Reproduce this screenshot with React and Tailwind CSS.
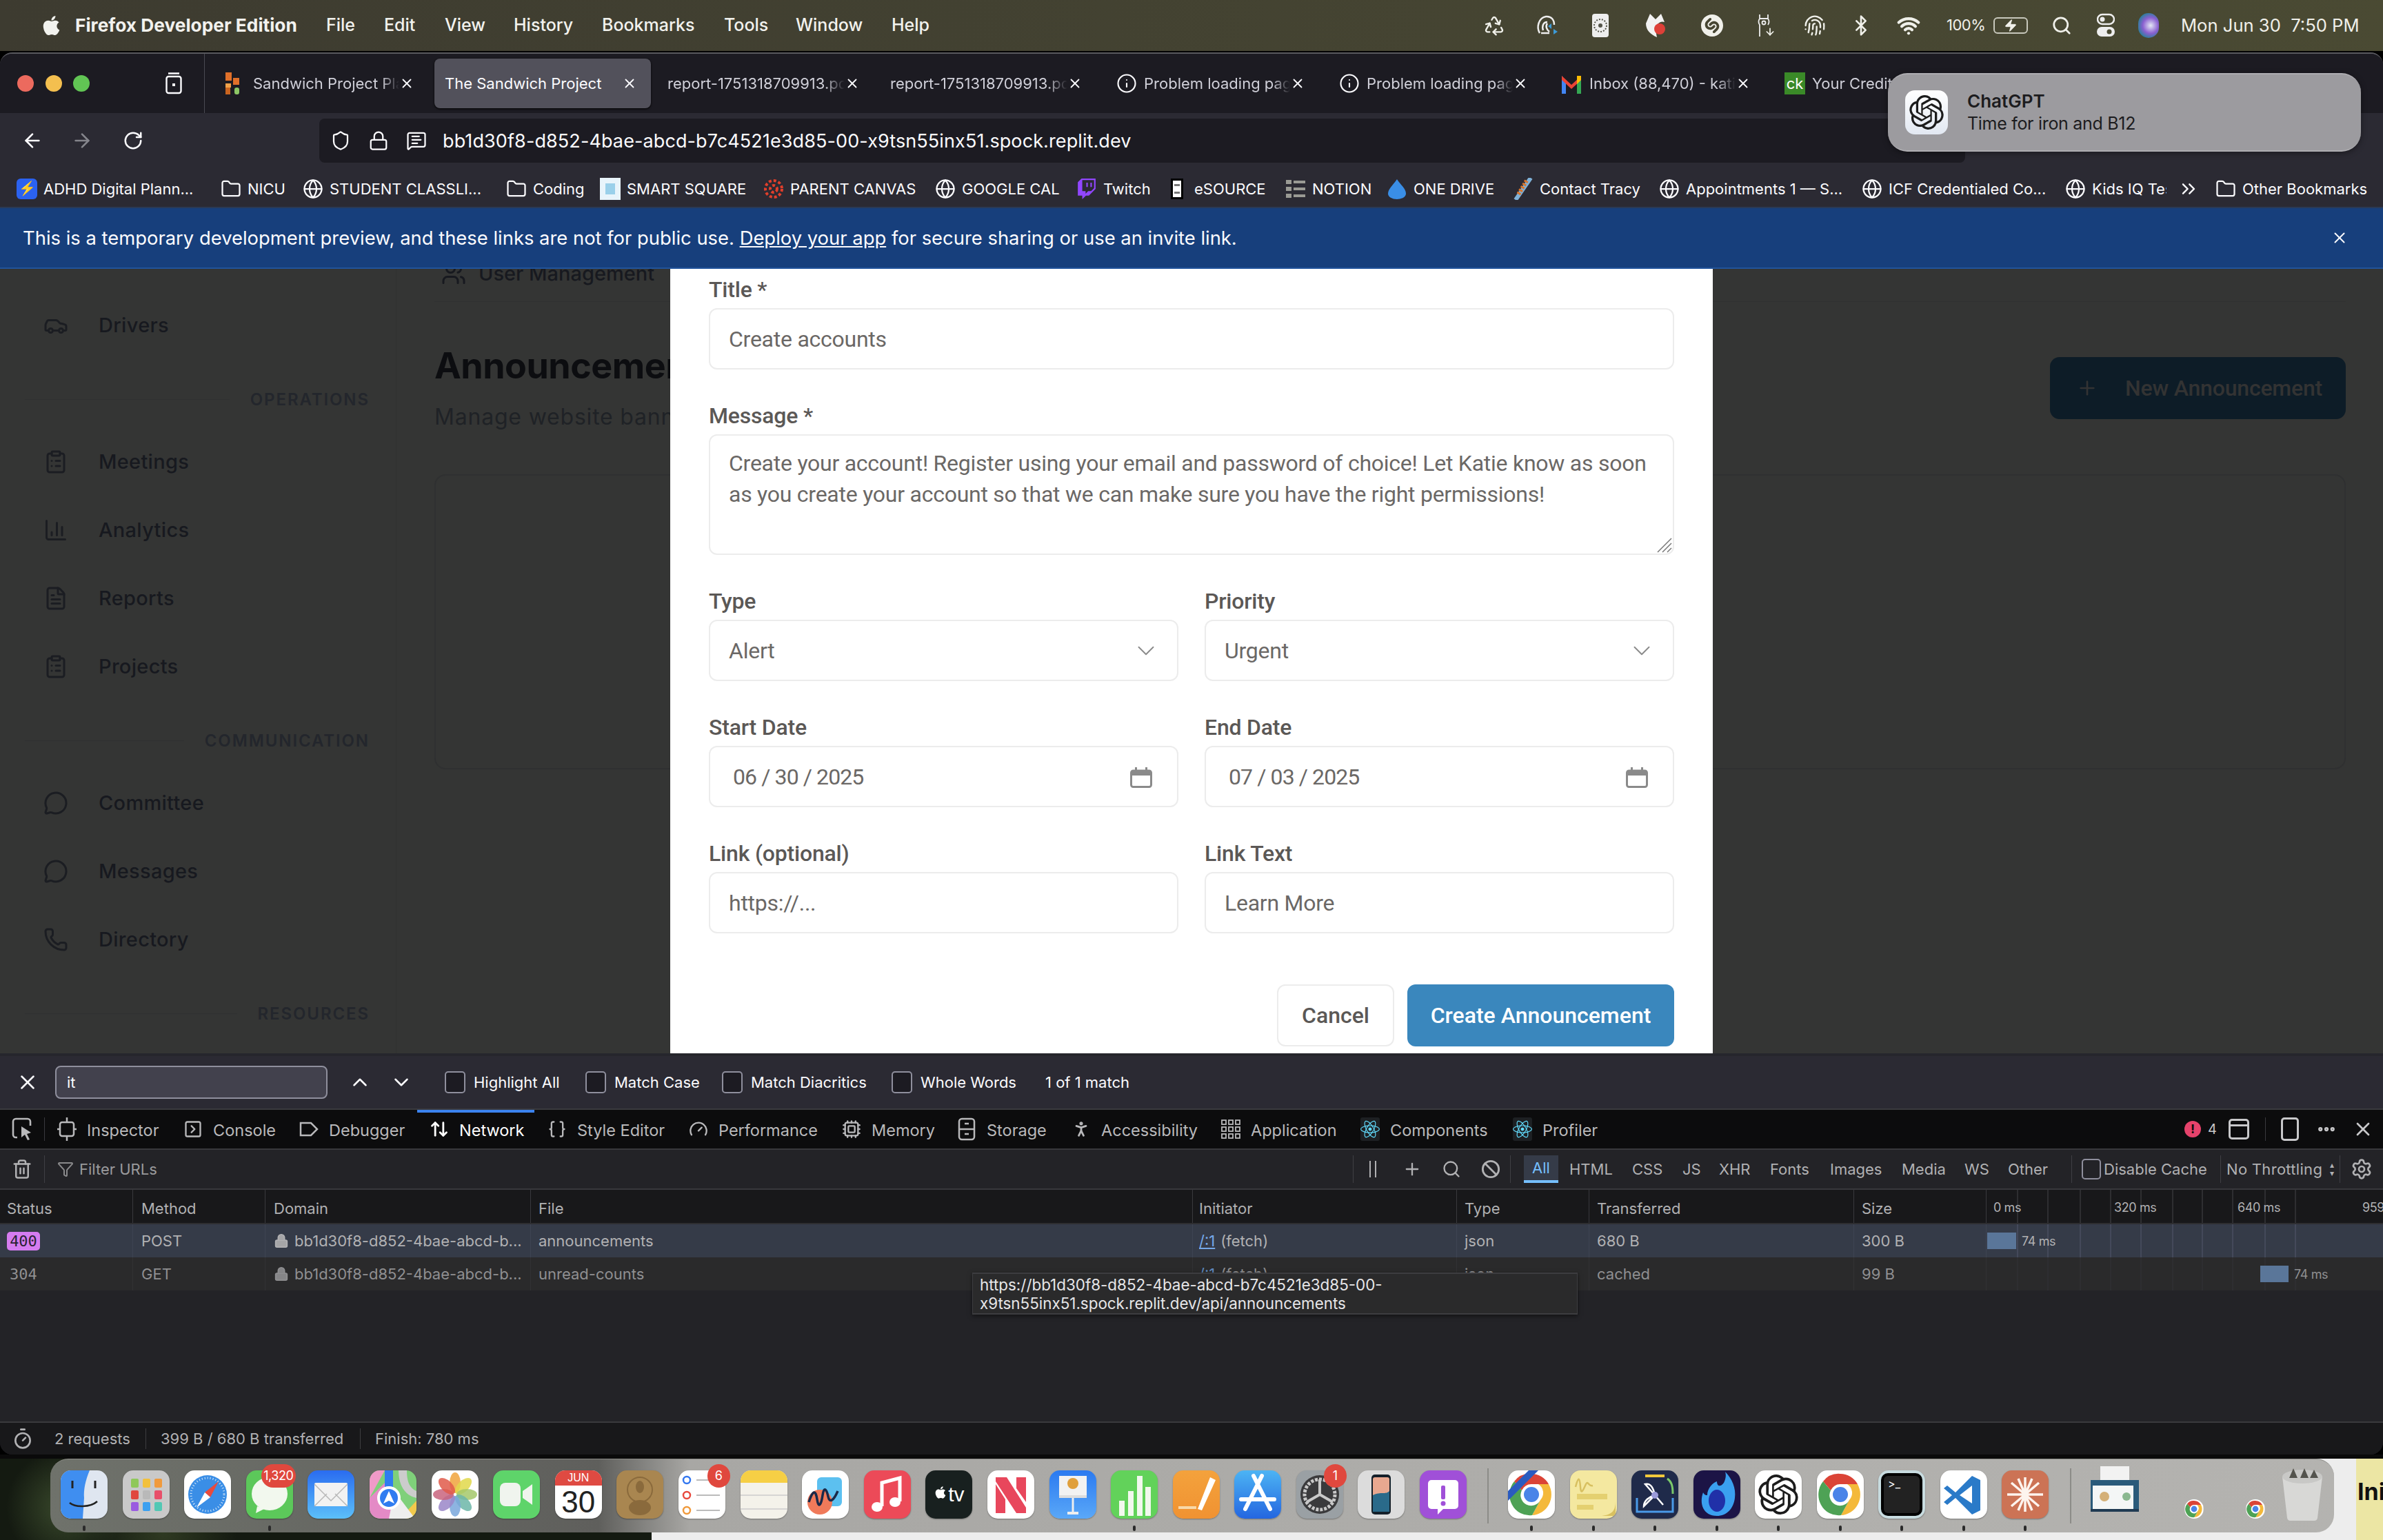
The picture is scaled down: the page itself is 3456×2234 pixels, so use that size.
import React from "react";
import clsx from "clsx";
import {
  ArrowDown, ArrowLeft, ArrowRight, ArrowUpDown, Ban, Bluetooth, Braces, Car, ChartColumn, ChevronDown, ChevronUp,
  ChevronsRight, ClipboardList, Cpu, Ellipsis, FileText, Filter, Fingerprint, Folder, Gauge, Globe, Info, Lock,
  MessageCircle, MessageSquareText, PersonStanding, Phone, Plus, Recycle, RotateCw, Search, Settings,
  Shield, SquareChevronRight, Timer, Trash2, Users, Wifi, X, Zap,
} from "lucide-react";
import { FaApple, FaReact } from "react-icons/fa";
import { SiOpenai, SiShazam, SiTwitch } from "react-icons/si";

const leftMenus = [
  ["File", "w-[84px]"], ["Edit", "w-[88px]"], ["View", "w-[100px]"], ["History", "w-[128px]"],
  ["Bookmarks", "w-[177px]"], ["Tools", "w-[104px]"], ["Window", "w-[139px]"], ["Help", "w-[836px]"],
];

function TrayFan() {
  return (
    <svg width="24" height="34" viewBox="0 0 24 34">
      <rect width="24" height="34" rx="4" fill="#eee" />
      <circle cx="12" cy="17" r="9" fill="none" stroke="#55554a" strokeWidth="2" strokeDasharray="2 2" />
      <circle cx="12" cy="17" r="3" fill="#55554a" />
    </svg>
  );
}

function TrayCloud() {
  return (
    <svg width="34" height="34" viewBox="0 0 34 34" fill="none">
      <path d="M6 28C1 20 4 6 15 4c8-1 12 5 12 12M8 28h12M11 24c-2-6 0-12 6-12M20 26c-4-3-6-8-3-12" stroke="#eee" strokeWidth="2.5" />
      <path d="M23 14l-5 4 5 4zM26 22l6 4-6 4z" fill="#3d9ad6" />
    </svg>
  );
}

function TrayM() {
  return (
    <svg width="28" height="34" viewBox="0 0 28 34">
      <path d="M0 14L6 0l8 8 8-8 5 12c-6-2-11 2-12 8-1 5 0 9 1 14C7 30 0 24 0 14z" fill="#f2f2f2" />
      <circle cx="20" cy="22" r="8" fill="#dd4038" />
    </svg>
  );
}

function TrayLlama() {
  return (
    <div className="relative w-[26px] h-[34px]">
      <svg width="18" height="34" viewBox="0 0 18 34" fill="none" stroke="#eee" strokeWidth="1.8">
        <path d="M3 1v6M15 1v6M3 7c-2 3-2 6 0 9v17M15 7c2 3 2 6 0 9M3 7h12" />
        <circle cx="9" cy="13" r="2.5" />
      </svg>
      <ArrowDown size={16} strokeWidth={2.6} className="absolute right-0 bottom-0" />
    </div>
  );
}

function MenuBar() {
  return (
    <div className="h-[74px] shrink-0 flex items-center pl-[40px] text-[25px] text-[#f2f2ee] bg-[linear-gradient(to_right,#3d3b30,#4a4a33)]">
      <FaApple className="w-[69px] text-[32px] pr-[39px] box-content -mr-[39px] shrink-0" />
      <span className="w-[364px] font-bold text-[26.3px] whitespace-nowrap">Firefox Developer Edition</span>
      {leftMenus.map(([label, w]) => (
        <span key={label} className={clsx("font-medium shrink-0", w)}>{label}</span>
      ))}
      <div className="flex items-center text-[#f0f0ea]">
        <div className="w-[76px] flex justify-center"><Recycle size={32} strokeWidth={1.8} /></div>
        <div className="w-[77px] flex justify-center"><TrayCloud /></div>
        <div className="w-[78px] flex justify-center"><TrayFan /></div>
        <div className="w-[81px] flex justify-center"><TrayM /></div>
        <div className="w-[84px] flex justify-center"><SiShazam size={32} /></div>
        <div className="w-[74px] flex justify-center"><TrayLlama /></div>
        <div className="w-[66px] flex justify-center"><Fingerprint size={32} strokeWidth={1.8} /></div>
        <div className="w-[68px] flex justify-center"><Bluetooth size={32} strokeWidth={2} /></div>
        <div className="w-[70px] flex justify-center"><Wifi size={34} strokeWidth={3} /></div>
        <span className="ml-[20px] w-[68px] text-[22px] tracking-[-0.5px]">100%</span>
        <div className="w-[50px] h-[24px] border-2 border-[#c8c8bc] rounded-[6px] flex items-center justify-center">
          <Zap size={20} fill="#f0f0ea" strokeWidth={1} />
        </div>
        <Search size={30} strokeWidth={2.2} className="ml-[34px]" />
        <svg width="26" height="36" viewBox="0 0 26 36" className="ml-[36px]">
          <rect x="1" y="2" width="24" height="14" rx="7" fill="none" stroke="#eee" strokeWidth="2.5" />
          <circle cx="8" cy="9" r="3.5" fill="#eee" />
          <rect y="20" width="26" height="14" rx="7" fill="#eee" />
          <circle cx="18" cy="27" r="3.5" fill="#4a4a33" />
        </svg>
        <span className="ml-[34px] w-[30px] h-[36px] rounded-full bg-[radial-gradient(circle_at_60%_50%,#e4e8f5,#8a5fd0_45%,#2c7f9c_75%,#3c3c40)]" />
        <span className="ml-[32px] text-[25.6px] whitespace-nowrap">Mon Jun 30&nbsp;&nbsp;7:50 PM</span>
      </div>
    </div>
  );
}

function FirefoxView() {
  return (
    <svg width="24" height="32" viewBox="0 0 24 32" fill="none" stroke="#fbfbfe" strokeWidth="2.4">
      <rect x="1.5" y="6" width="21" height="24" rx="3" />
      <path d="M4 1.5h16" />
      <rect x="10" y="16" width="4" height="4" fill="#fbfbfe" stroke="none" />
    </svg>
  );
}

function SandwichIcon() {
  return (
    <svg width="22" height="32" viewBox="0 0 22 32">
      <rect y="0" width="9" height="12" fill="#e0702a" />
      <rect x="11" y="8" width="9" height="10" fill="#e0702a" />
      <rect y="16" width="8" height="6" fill="#f0a24a" />
      <rect y="22" width="7" height="10" fill="#c9641f" />
      <rect x="13" y="22" width="7" height="10" rx="3" fill="#8cc665" />
    </svg>
  );
}

function GmailIcon() {
  return (
    <svg width="28" height="30" viewBox="0 0 28 30">
      <path d="M0 4v26h6V12z" fill="#4285f4" />
      <path d="M22 12v18h6V4z" fill="#34a853" />
      <path d="M0 4l14 13L28 4v6L14 23 0 10z" fill="#ea4335" />
      <path d="M22 4h6v6l-6 6z" fill="#fbbc04" />
    </svg>
  );
}

function Tab({ label, icon, active }) {
  return (
    <div className={clsx("w-[314px] h-[72px] mr-[9px] shrink-0 flex items-center rounded-[8px] pr-[20px]", icon ? "pl-[20px]" : "pl-[15px]", active && "bg-[#52515b] shadow-[0_1px_3px_#000]")}>
      {icon && <div className="w-[40px] shrink-0">{icon}</div>}
      <div className={clsx("flex-1 overflow-hidden whitespace-nowrap text-[22px]", active ? "text-[#fbfbfe]" : "text-[#cfcfd8] [mask-image:linear-gradient(to_right,black_88%,transparent)]")}>{label}</div>
      <X size={22} strokeWidth={2} className="text-[#fbfbfe] shrink-0" />
    </div>
  );
}

function TabStrip() {
  return (
    <div className="h-[86px] flex items-center bg-[#1c1b22] overflow-hidden">
      <div className="w-[297px] h-full shrink-0 border-r border-[#4a4a52] flex items-center pl-[25px]">
        <span className="w-[24px] h-[24px] rounded-full bg-[#ec6a5e]" />
        <span className="w-[24px] h-[24px] rounded-full bg-[#f4bf4f] ml-[17px]" />
        <span className="w-[24px] h-[24px] rounded-full bg-[#61c554] ml-[16px]" />
        <div className="ml-[110px]"><FirefoxView /></div>
      </div>
      <div className="flex pl-[10px]">
        <Tab label="Sandwich Project Plan" icon={<SandwichIcon />} />
        <Tab label="The Sandwich Project" active />
        <Tab label="report-1751318709913.pdf" />
        <Tab label="report-1751318709913.pdf" />
        <Tab label="Problem loading page" icon={<Info size={30} strokeWidth={1.7} className="text-[#fbfbfe]" />} />
        <Tab label="Problem loading page" icon={<Info size={30} strokeWidth={1.7} className="text-[#fbfbfe]" />} />
        <Tab label="Inbox (88,470) - katie@" icon={<GmailIcon />} />
        <Tab label="Your Credit Karma" icon={<span className="block w-[30px] h-[32px] bg-[#3a8a28] text-white text-[22px] leading-[32px] text-center">ck</span>} />
      </div>
    </div>
  );
}

function UrlBar() {
  return (
    <div className="h-[84px] flex items-start pt-[8px] bg-[#2b2a33] text-[#fbfbfe]">
      <div className="w-[463px] shrink-0 h-[64px] flex items-center text-[#fbfbfe]">
        <ArrowLeft size={32} strokeWidth={2} className="ml-[31px]" />
        <ArrowRight size={32} strokeWidth={2} className="ml-[40px] text-[#85858c]" />
        <RotateCw size={30} strokeWidth={2} className="ml-[43px]" />
      </div>
      <div className="w-[2387px] h-[64px] rounded-[8px] bg-[#1c1b22] flex items-center">
        <Shield size={30} strokeWidth={1.8} className="ml-[16px]" />
        <Lock size={30} strokeWidth={1.8} className="ml-[25px]" />
        <MessageSquareText size={30} strokeWidth={1.8} className="ml-[25px]" />
        <span className="ml-[23px] pt-[3px] text-[27px] font-normal tracking-[0.1px]">bb1d30f8-d852-4bae-abcd-b7c4521e3d85-00-x9tsn55inx51.spock.replit.dev</span>
      </div>
    </div>
  );
}

const FolderIcon = <Folder size={30} strokeWidth={1.8} />;
const GlobeIcon = <Globe size={30} strokeWidth={1.8} />;

const bookmarks = [
  { label: "ADHD Digital Plann...", w: "w-[296px]", icon: <span className="block w-[30px] h-[30px] rounded-[6px] bg-[#2b62f0] text-center text-[20px] leading-[28px]">⚡</span> },
  { label: "NICU", w: "w-[119px]", icon: FolderIcon },
  { label: "STUDENT CLASSLI...", w: "w-[295px]", icon: GlobeIcon },
  { label: "Coding", w: "w-[136px]", icon: FolderIcon },
  { label: "SMART SQUARE", w: "w-[237px]", icon: <span className="block w-[32px] h-[32px] bg-[#e8f4fb] p-[8px]"><span className="block w-full h-full bg-[#9ad0ea]" /></span> },
  { label: "PARENT CANVAS", w: "w-[249px]", icon: <svg width="30" height="30" viewBox="0 0 30 30" fill="none" stroke="#e13f2b" strokeWidth="4" strokeDasharray="4 3"><circle cx="15" cy="15" r="12" /><circle cx="15" cy="15" r="5" /></svg> },
  { label: "GOOGLE CAL", w: "w-[205px]", icon: GlobeIcon },
  { label: "Twitch", w: "w-[137px]", icon: <SiTwitch size={30} className="text-[#9146ff]" /> },
  { label: "eSOURCE", w: "w-[166px]", icon: <span className="block w-[18px] h-[30px] bg-white border-[3px] border-black pt-[5px] px-[2px]"><span className="block h-[14px] border-y-[3px] border-[#777]" /></span> },
  { label: "NOTION", w: "w-[147px]", icon: <svg width="28" height="30" viewBox="0 0 28 30" fill="#9a9a94"><rect y="2" width="8" height="6" /><rect x="11" y="3" width="17" height="4" /><rect y="12" width="8" height="6" /><rect x="11" y="13" width="17" height="4" /><rect y="22" width="8" height="6" /><rect x="11" y="23" width="17" height="4" /></svg> },
  { label: "ONE DRIVE", w: "w-[183px]", icon: <svg width="30" height="30" viewBox="0 0 30 30"><path d="M15 1c6 9 13 14 13 21a13 8 0 0 1-26 0C2 15 9 10 15 1z" fill="#3a8ee6" /></svg> },
  { label: "Contact Tracy", w: "w-[212px]", icon: <svg width="30" height="32" viewBox="0 0 30 32"><path d="M26 0L4 32" stroke="#7fb1d8" strokeWidth="6" /><path d="M20 4L8 24" stroke="#d9762d" strokeWidth="6" strokeDasharray="3 2" /></svg> },
  { label: "Appointments 1 — S...", w: "w-[294px]", icon: GlobeIcon },
  { label: "ICF Credentialed Co...", w: "w-[295px]", icon: GlobeIcon },
  { label: "Kids IQ Test", w: "w-[147px] mr-[16px]", icon: GlobeIcon },
];

function BookmarkBar() {
  return (
    <div className="h-[52px] flex items-center pl-[24px] bg-[#2b2a33] text-[#fbfbfe] text-[22px]">
      {bookmarks.map((b) => (
        <div key={b.label} className={clsx("flex items-center shrink-0 overflow-hidden whitespace-nowrap", b.w)}>
          <span className={clsx("shrink-0 flex justify-center", b.label === "eSOURCE" ? "w-[18px] mr-[16px]" : "w-[30px] mr-[9px]")}>{b.icon}</span>
          <span>{b.label}</span>
        </div>
      ))}
      <div className="w-[55px] shrink-0"><ChevronsRight size={32} strokeWidth={1.8} /></div>
      <span className="w-[30px] mr-[9px] shrink-0">{FolderIcon}</span>
      <span className="whitespace-nowrap">Other Bookmarks</span>
    </div>
  );
}

function Banner() {
  return (
    <div className="h-[90px] flex items-center pl-[33px] pr-[50px] bg-[#173f7c] border-t-2 border-[#2a3a55] border-b-2 border-b-[#22549c] text-[#fbfbfe] text-[27.4px]">
      <p className="pt-[2px]">
        This is a temporary development preview, and these links are not for public use. <span className="underline">Deploy your app</span> for secure sharing or use an invite link.
      </p>
      <X size={26} strokeWidth={1.8} className="ml-auto" />
    </div>
  );
}

function NavRow({ icon: Icon, label }) {
  return (
    <div className="h-[99px] pl-[63px] flex items-center text-[29px] tracking-[0.3px] font-medium text-[#17191f]">
      <Icon size={36} strokeWidth={2} className="mr-[44px] text-[#1b1d22]" />
      {label}
    </div>
  );
}

function NavSection({ label }) {
  return (
    <div className="h-[99px] pt-[18px] pl-[36px] pr-[38px] flex items-center">
      <div className="flex-1 border-t border-[#2f3031]" />
      <span className="ml-[30px] text-[24px] font-semibold tracking-[1.9px] text-[#23262c]">{label}</span>
    </div>
  );
}

function Sidebar() {
  return (
    <div className="w-[575px] shrink-0 h-full pt-[32px] border-r border-[#303131]">
      <NavRow icon={Car} label="Drivers" />
      <NavSection label="OPERATIONS" />
      <NavRow icon={ClipboardList} label="Meetings" />
      <NavRow icon={ChartColumn} label="Analytics" />
      <NavRow icon={FileText} label="Reports" />
      <NavRow icon={ClipboardList} label="Projects" />
      <NavSection label="COMMUNICATION" />
      <NavRow icon={MessageCircle} label="Committee" />
      <NavRow icon={MessageCircle} label="Messages" />
      <NavRow icon={Phone} label="Directory" />
      <NavSection label="RESOURCES" />
    </div>
  );
}

function Behind() {
  return (
    <div className="flex-1 h-full pl-[55px] pr-[54px] min-w-0">
      <div className="h-[48px] pb-[34px] flex items-center border-b border-[#2f3031] text-[29px] font-medium text-[#17191f]">
        <Users size={36} strokeWidth={2} className="ml-[10px] mr-[18px]" />
        User Management
      </div>
      <div className="mt-[62px] h-[130px] flex justify-between items-start">
        <div>
          <h1 className="text-[52px] leading-[62px] font-bold text-[#0c0d10] tracking-[-0.5px]">Announcements</h1>
          <p className="mt-[21px] text-[32px] leading-[44px] tracking-[0.8px] text-[#1f2226]">Manage website banners</p>
        </div>
        <div className="mt-[18px] w-[429px] h-[90px] rounded-[14px] bg-[#0d1c27] flex items-center pl-[38px] font-['Roboto',sans-serif] font-medium text-[32px] tracking-[-0.2px] text-[#333]">
          <Plus size={32} strokeWidth={2} className="mr-[39px]" />
          New Announcement
        </div>
      </div>
      <div className="mt-[58px] h-[428px] rounded-[16px] border-2 border-[#2f3031] bg-[#343534]" />
    </div>
  );
}

function Field({ label, children }) {
  return (
    <div>
      <div className="h-[40px] leading-[40px] mb-[7px] font-medium text-[#5b5856] text-[32px] tracking-[-0.2px]">{label}</div>
      {children}
    </div>
  );
}

const box = "h-[89px] border-2 border-[#ececec] rounded-[12px] flex items-center pl-[27px] text-[#6b6866] tracking-[-0.25px]";

function CalendarIcon() {
  return (
    <svg width="32" height="30" viewBox="0 0 32 30" className="absolute right-[36px] top-[29px]">
      <rect x="1.5" y="5" width="29" height="23.5" rx="3" fill="none" stroke="#8a8a8a" strokeWidth="3" />
      <rect x="1.5" y="5" width="29" height="7" fill="#8a8a8a" />
      <rect x="7" y="0" width="3" height="6" fill="#8a8a8a" />
      <rect x="22" y="0" width="3" height="6" fill="#8a8a8a" />
    </svg>
  );
}

function Modal() {
  return (
    <div className="absolute left-[972px] top-0 bottom-0 w-[1512px] bg-white px-[56px] pt-[10px] font-['Roboto',sans-serif] text-[32px] flex flex-col gap-[47px]">
      <Field label="Title *">
        <div className={box}>Create accounts</div>
      </Field>
      <Field label="Message *">
        <div className="relative h-[175px] border-2 border-[#ececec] rounded-[12px] pl-[27px] pr-[16px] pt-[18px] text-[#6b6866] leading-[45px] tracking-[-0.25px]">
          Create your account! Register using your email and password of choice! Let Katie know as soon as you create your account so that we can make sure you have the right permissions!
          <svg width="22" height="22" viewBox="0 0 22 22" className="absolute right-[1px] bottom-[1px]" stroke="#777" strokeWidth="1.5">
            <path d="M1 21L21 1M8 21L21 8M15 21l6-6" />
          </svg>
        </div>
      </Field>
      <div className="grid grid-cols-2 gap-x-[38px] gap-y-[47px]">
        <Field label="Type">
          <div className={clsx(box, "justify-between pr-[24px]")}>
            Alert
            <ChevronDown size={42} strokeWidth={1.1} className="text-[#8a8a8a]" />
          </div>
        </Field>
        <Field label="Priority">
          <div className={clsx(box, "justify-between pr-[24px]")}>
            Urgent
            <ChevronDown size={42} strokeWidth={1.1} className="text-[#8a8a8a]" />
          </div>
        </Field>
        <Field label="Start Date">
          <div className={clsx(box, "relative pl-[33px] !tracking-[-0.9px]")}>
            06 / 30 / 2025
            <CalendarIcon />
          </div>
        </Field>
        <Field label="End Date">
          <div className={clsx(box, "relative pl-[33px] !tracking-[-0.9px]")}>
            07 / 03 / 2025
            <CalendarIcon />
          </div>
        </Field>
        <Field label="Link (optional)">
          <div className={box}>https://...</div>
        </Field>
        <Field label="Link Text">
          <div className={box}>Learn More</div>
        </Field>
      </div>
      <div className="mt-[27px] flex justify-end gap-[19px] font-medium">
        <div className="w-[170px] h-[90px] border-2 border-[#ececec] rounded-[12px] flex items-center justify-center text-[#5b5856]">Cancel</div>
        <div className="w-[387px] h-[90px] rounded-[12px] bg-[#3a87bd] text-white flex items-center justify-center">Create Announcement</div>
      </div>
    </div>
  );
}

function Page() {
  return (
    <div className="relative h-[1138px] flex bg-[#343534] overflow-hidden">
      <Sidebar />
      <Behind />
      <Modal />
    </div>
  );
}

function FindCheck({ label, w }) {
  return (
    <div className={clsx("flex items-center shrink-0", w)}>
      <span className="w-[30px] h-[32px] rounded-[5px] border-2 border-[#8f8f9d] bg-[#1c1b22] mr-[12px]" />
      {label}
    </div>
  );
}

function FindBar() {
  return (
    <div className="h-[82px] border-t-4 border-[#26262c] flex items-center bg-[#2b2a33] text-[#fbfbfe] text-[22px] border-b-2 border-b-[#3a3a3e]">
      <X size={34} strokeWidth={1.8} className="ml-[23px]" />
      <div className="ml-[23px] w-[395px] h-[48px] rounded-[8px] bg-[#42414d] border-2 border-[#8f8f9d] flex items-center pl-[15px] text-[22px]">it</div>
      <ChevronUp size={34} strokeWidth={1.8} className="ml-[30px]" />
      <ChevronDown size={34} strokeWidth={1.8} className="ml-[26px]" />
      <div className="ml-[46px] flex items-center">
        <FindCheck label="Highlight All" w="w-[204px]" />
        <FindCheck label="Match Case" w="w-[198px]" />
        <FindCheck label="Match Diacritics" w="w-[246px]" />
        <FindCheck label="Whole Words" w="w-[223px]" />
        <span>1 of 1 match</span>
      </div>
    </div>
  );
}

function PickerIcon() {
  return (
    <svg width="32" height="36" viewBox="0 0 32 36" fill="none" stroke="currentColor" strokeWidth="2.6">
      <path d="M9 30H7a4 4 0 0 1-4-4V7a4 4 0 0 1 4-4h17a4 4 0 0 1 4 4v6" />
      <path d="M15 14l14 9-6 2 4 8-3 1-4-8-5 4z" fill="currentColor" stroke="none" />
    </svg>
  );
}

function InspectorIcon() {
  return (
    <svg width="28" height="34" viewBox="0 0 28 34" fill="none" stroke="currentColor" strokeWidth="2.5">
      <rect x="4" y="7" width="20" height="20" rx="3" />
      <path d="M14 0v7M14 27v7M0 17h4M24 17h4" />
    </svg>
  );
}

function DebuggerIcon() {
  return (
    <svg width="28" height="28" viewBox="0 0 28 28" fill="none" stroke="currentColor" strokeWidth="2.5">
      <path d="M2 5h15l9 9-9 9H2z" />
    </svg>
  );
}

function StorageIcon() {
  return (
    <svg width="28" height="34" viewBox="0 0 28 34" fill="none" stroke="currentColor" strokeWidth="2.5">
      <rect x="3" y="2" width="22" height="30" rx="4" />
      <path d="M3 17h22M11 9h6M11 24h6" />
    </svg>
  );
}

function AppIcon() {
  return (
    <svg width="28" height="28" viewBox="0 0 28 28" fill="none" stroke="currentColor" strokeWidth="1.8">
      {[1, 11, 21].map((y) => [1, 11, 21].map((x) => <rect key={`${x}-${y}`} x={x} y={y} width="6" height="6" />))}
    </svg>
  );
}

function ReactIcon() {
  return (
    <span className="w-[28px] h-[34px] bg-[#1d2023] rounded-[3px] flex items-center justify-center">
      <FaReact size={28} className="text-[#61dafb]" />
    </span>
  );
}

const devTabs = [
  { label: "Inspector", w: "w-[183px]", icon: <InspectorIcon /> },
  { label: "Console", w: "w-[168px]", icon: <SquareChevronRight size={30} strokeWidth={2} /> },
  { label: "Debugger", w: "w-[189px]", icon: <DebuggerIcon /> },
  { label: "Network", w: "w-[171px]", icon: <ArrowUpDown size={34} strokeWidth={2.4} />, active: true },
  { label: "Style Editor", w: "w-[205px]", icon: <Braces size={30} strokeWidth={2} /> },
  { label: "Performance", w: "w-[222px]", icon: <Gauge size={30} strokeWidth={2} /> },
  { label: "Memory", w: "w-[167px]", icon: <Cpu size={30} strokeWidth={2} /> },
  { label: "Storage", w: "w-[166px]", icon: <StorageIcon /> },
  { label: "Accessibility", w: "w-[217px]", icon: <PersonStanding size={34} strokeWidth={2.4} /> },
  { label: "Application", w: "w-[202px]", icon: <AppIcon /> },
  { label: "Components", w: "w-[221px]", icon: <ReactIcon /> },
  { label: "Profiler", w: "w-[150px]", icon: <ReactIcon /> },
];

function DevTabs() {
  return (
    <div className="relative h-[56px] flex items-center bg-[#0c0c0d] text-[#b9b9bb] text-[23.5px]">
      <div className="w-[65px] h-[34px] border-r border-[#39393e] shrink-0 flex justify-center items-center">
        <PickerIcon />
      </div>
      <div className="ml-[18px] flex">
        {devTabs.map((t) => (
          <div key={t.label} className={clsx("relative flex items-center shrink-0 h-[56px] whitespace-nowrap", t.w, t.active && "text-white")}>
            <span className="w-[28px] flex justify-center mr-[15px] shrink-0">{t.icon}</span>
            <span className="pt-[3px]">{t.label}</span>
          </div>
        ))}
      </div>
      <span className="absolute left-[605px] top-0 w-[170px] h-[4px] bg-[#3b82ee]" />
      <div className="ml-auto flex items-center text-[#c8c8ca]">
        <span className="w-[24px] h-[24px] rounded-full bg-[#e6436b] text-[#0c0c0d] text-[18px] font-bold leading-[24px] text-center">!</span>
        <span className="ml-[10px] text-[20px] w-[13px]">4</span>
        <span className="ml-[17px] w-[30px] h-[30px] rounded-[5px] border-[3px] border-[#c8c8ca] flex flex-col">
          <span className="h-[8px] border-b-[3px] border-[#c8c8ca]" />
        </span>
        <span className="ml-[23px] w-0 h-[34px] border-l border-[#39393e]" />
        <span className="ml-[22px] w-[26px] h-[34px] rounded-[5px] border-[3px] border-[#c8c8ca]" />
        <Ellipsis size={30} strokeWidth={3} className="ml-[25px]" />
        <X size={32} strokeWidth={2} className="ml-[22px] mr-[13px]" />
      </div>
    </div>
  );
}

const filterTabs = [
  ["HTML", "w-[91px]"], ["CSS", "w-[73px]"], ["JS", "w-[53px]"], ["XHR", "w-[74px]"], ["Fonts", "w-[87px]"],
  ["Images", "w-[104px]"], ["Media", "w-[91px]"], ["WS", "w-[63px]"], ["Other", "w-[92px]"],
];

function FilterBar() {
  return (
    <div className="h-[58px] flex items-center bg-[#232327] border-t-2 border-[#38383c] text-[#b1b1b3] text-[22px]">
      <div className="w-[1962px] shrink-0 flex items-center">
        <div className="w-[65px] h-[40px] border-r border-[#3f3f44] shrink-0 flex justify-center items-center">
          <Trash2 size={30} strokeWidth={2} />
        </div>
        <Filter size={24} strokeWidth={2} className="ml-[18px] text-[#8a8a8c]" />
        <span className="ml-[8px] text-[#9a9a9c]">Filter URLs</span>
      </div>
      <div className="w-[229px] h-[40px] border-x border-[#3f3f44] grid grid-cols-4 place-items-center shrink-0">
        <span className="w-[10px] h-[24px] border-x-2 border-[#b1b1b3]" />
        <Plus size={28} strokeWidth={2} />
        <Search size={28} strokeWidth={2} />
        <Ban size={28} strokeWidth={2.4} />
      </div>
      <div className="ml-[19px] w-[50px] h-[40px] mr-[16px] bg-[#353b48] border-b-[4px] border-[#75bfff] flex items-center justify-center text-[#75bfff] shrink-0">All</div>
      {filterTabs.map(([label, w]) => (
        <span key={label} className={clsx("shrink-0", w)}>{label}</span>
      ))}
      <div className="w-0 h-[40px] border-l border-[#3f3f44]" />
      <span className="ml-[14px] w-[28px] h-[30px] rounded-[5px] border-2 border-[#8f8f9d]" />
      <span className="ml-[4px] w-[169px] whitespace-nowrap">Disable Cache</span>
      <div className="w-0 h-[40px] border-l border-[#3f3f44]" />
      <span className="ml-[8px] w-[150px] whitespace-nowrap tracking-[0.3px]">No Throttling</span>
      <span className="text-[12px] leading-[12px] w-[14px]">▴<br />▾</span>
      <div className="w-0 h-[40px] border-l border-[#3f3f44]" />
      <Settings size={32} strokeWidth={2} className="ml-[15px]" />
    </div>
  );
}

const gridLines = ["left-[44px]", "left-[88px]", "left-[135px]", "left-[179px]", "left-[223px]", "left-[269px]", "left-[312px]", "left-[356px]", "left-[403px]", "left-[447px]"];

const colStatus = "w-[193px] shrink-0 border-r pl-[10px]";
const colMethod = "w-[192px] shrink-0 border-r pl-[12px]";
const colDomain = "w-[385px] shrink-0 border-r pl-[12px] overflow-hidden whitespace-nowrap";
const colFile = "w-[960px] shrink-0 border-r pl-[11px]";
const colInit = "w-[383px] shrink-0 border-r pl-[9px]";
const colType = "w-[192px] shrink-0 border-r pl-[11px]";
const colTrans = "w-[384px] shrink-0 border-r pl-[11px]";
const colSize = "w-[192px] shrink-0 border-r pl-[11px]";

function Waterfall({ children, bright }) {
  return (
    <div className="relative flex-1 h-full overflow-hidden whitespace-nowrap">
      {gridLines.map((l) => (
        <span key={l} className={clsx("absolute top-0 bottom-0 w-[2px]", l, bright ? "bg-[#2e2e31]" : "bg-[#44495a]")} />
      ))}
      {children}
    </div>
  );
}

function NetworkTable() {
  return (
    <div className="text-[22px]">
      <div className="h-[52px] border-t-2 border-[#38383c] border-b-2 border-b-[#2e2e31] bg-[#18181a] text-[#b1b1b3] flex items-center [&>div]:h-full [&>div]:flex [&>div]:items-center [&>div]:pt-[6px] [&>div]:border-[#39393d]">
        <div className={colStatus}>Status</div>
        <div className={colMethod}>Method</div>
        <div className={colDomain}>Domain</div>
        <div className={colFile}>File</div>
        <div className={colInit}>Initiator</div>
        <div className={colType}>Type</div>
        <div className={colTrans}>Transferred</div>
        <div className={colSize}>Size</div>
        <Waterfall bright>
          <span className="absolute left-[10px] top-[12px] text-[18px] tracking-[-0.4px]">0 ms</span>
          <span className="absolute left-[185px] top-[12px] text-[18px] tracking-[-0.4px]">320 ms</span>
          <span className="absolute left-[364px] top-[12px] text-[18px] tracking-[-0.4px]">640 ms</span>
          <span className="absolute left-[545px] top-[12px] text-[18px] tracking-[-0.4px]">959</span>
        </Waterfall>
      </div>
      <div className="h-[48px] bg-[#353b48] text-[#b1b1b3] flex items-center [&>div]:h-full [&>div]:flex [&>div]:items-center [&>div]:border-[#3e4452]">
        <div className={colStatus}>
          <span className="w-[48px] h-[27px] rounded-[5px] bg-[#d57cf0] text-[#2a2233] text-[22px] text-center leading-[27px] font-['DejaVu_Sans_Mono',monospace]">400</span>
        </div>
        <div className={colMethod}>POST</div>
        <div className={colDomain}>
          <Lock size={22} fill="#a5a5a7" strokeWidth={2} className="mr-[8px] shrink-0" />
          bb1d30f8-d852-4bae-abcd-b...
        </div>
        <div className={colFile}>announcements</div>
        <div className={colInit}>
          <span className="text-[#75a8e8] underline mr-[8px]">/:1</span>(fetch)
        </div>
        <div className={colType}>json</div>
        <div className={colTrans}>680 B</div>
        <div className={colSize}>300 B</div>
        <Waterfall>
          <span className="absolute left-[1px] top-[12px] w-[42px] h-[24px] bg-[#5a7699]" />
          <span className="absolute left-[51px] top-[11px] text-[18px] tracking-[-0.4px]">74 ms</span>
        </Waterfall>
      </div>
      <div className="h-[48px] bg-[#2a2a2b] text-[#8f8f91] flex items-center [&>div]:h-full [&>div]:flex [&>div]:items-center [&>div]:border-[#323234]">
        <div className={clsx(colStatus, "!pl-[14px]")}>
          <span className="font-['DejaVu_Sans_Mono',monospace] text-[22px]">304</span>
        </div>
        <div className={colMethod}>GET</div>
        <div className={colDomain}>
          <Lock size={22} fill="#858587" strokeWidth={2} className="mr-[8px] shrink-0" />
          bb1d30f8-d852-4bae-abcd-b...
        </div>
        <div className={colFile}>unread-counts</div>
        <div className={colInit}>
          <span className="text-[#5f88bd] underline mr-[8px]">/:1</span>(fetch)
        </div>
        <div className={colType}>json</div>
        <div className={colTrans}>cached</div>
        <div className={colSize}>99 B</div>
        <Waterfall bright>
          <span className="absolute left-[397px] top-[12px] w-[41px] h-[24px] bg-[#5a7699]" />
          <span className="absolute left-[446px] top-[11px] text-[18px] tracking-[-0.4px]">74 ms</span>
        </Waterfall>
      </div>
    </div>
  );
}

function Tooltip() {
  return (
    <div className="absolute left-[1410px] top-[1846px] w-[878px] h-[61px] bg-[#2a2a2b] border-t-2 border-x border-b-2 border-[#3d3d40] pl-[10px] pt-[2px] text-[22.4px] leading-[27px] text-[#e6e6e8] shadow-[0_2px_6px_#0008]">
      https://bb1d30f8-d852-4bae-abcd-b7c4521e3d85-00-<br />x9tsn55inx51.spock.replit.dev/api/announcements
    </div>
  );
}

function StatusBar() {
  return (
    <div className="h-[48px] border-t-2 border-[#3a3a3d] bg-[#18181a] flex items-center text-[#b1b1b3] text-[22px]">
      <Timer size={32} strokeWidth={2} className="ml-[17px]" />
      <span className="ml-[30px] w-[132px]">2 requests</span>
      <span className="w-0 h-[30px] border-l border-[#3d3d40]" />
      <span className="ml-[21px] w-[289px] whitespace-nowrap">399 B / 680 B transferred</span>
      <span className="w-0 h-[30px] border-l border-[#3d3d40]" />
      <span className="ml-[21px]">Finish: 780 ms</span>
    </div>
  );
}

function Chrome({ beta }) {
  return (
    <svg viewBox="0 0 68 70" className="w-full h-full">
      <rect width="68" height="70" fill="#fff" />
      <path d="M34 5a29 30 0 0 1 25 15H34a15 15 0 0 0-14 9L9 16A29 30 0 0 1 34 5z" fill="#db4437" />
      <path d="M59 20a29 30 0 0 1-24 45l12-22a15 15 0 0 0-3-23z" fill="#f4b93a" />
      <path d="M9 16a29 30 0 0 0 26 49l12-22a15 15 0 0 1-27-14z" fill="#4ea255" />
      <circle cx="34" cy="35" r="14" fill="#fff" />
      <circle cx="34" cy="35" r="11" fill="#4a84e8" />
      {beta && <path d="M0 30L30 0h14L0 44z" fill="#2a5bc0" />}
    </svg>
  );
}

function Tile({ children, dot, badge, badgeClass, className }) {
  return (
    <div className="relative w-[68px] h-[70px] shrink-0">
      <div className={clsx("w-full h-full rounded-[15px] overflow-hidden shadow-[0_1px_2px_#0005]", className)}>{children}</div>
      {dot && <span className="absolute left-[32px] top-[80px] w-[4px] h-[8px] rounded-full bg-[#2a2a2a]" />}
      {badge && <span className={clsx("absolute h-[34px] -top-[9px] rounded-full bg-[#e0483e] text-white text-[18px] leading-[34px] text-center", badgeClass)}>{badge}</span>}
    </div>
  );
}

const Svg = ({ children }) => <svg viewBox="0 0 68 70" className="w-full h-full">{children}</svg>;

const petals = [
  ["#f0a33c", 0], ["#e0d84a", 45], ["#a4c86a", 90], ["#6cb6a8", 135], ["#79a7dc", 180], ["#9a86c8", 225], ["#c9647e", 270], ["#e05a4a", 315],
];

function DockLeftApps() {
  return (
    <>
      <Tile dot>
        <Svg>
          <rect width="68" height="70" fill="#dfe6f0" />
          <path d="M0 0h42c-6 14-9 28-8 40l-2 30H0z" fill="#3f8ef0" />
          <path d="M17 15v11M50 15v11" stroke="#222" strokeWidth="3" />
          <path d="M13 47c8 7 30 7 40-2" stroke="#222" strokeWidth="2.5" fill="none" />
        </Svg>
      </Tile>
      <Tile className="bg-[#c9c9c9]">
        <Svg>
          {[["#8fc85a", "#f2c03c", "#f09a3c"], ["#e0483e", "#b9b9b9", "#e8506a"], ["#9a5be0", "#3ca0f0", "#52c8b4"]].map((row, r) =>
            row.map((c, i) => <rect key={c} x={12 + i * 17} y={12 + r * 17} width="11" height="13" rx="2" fill={c} />)
          )}
        </Svg>
      </Tile>
      <Tile className="bg-white">
        <Svg>
          <circle cx="34" cy="35" r="28" fill="#3a8ee6" />
          <circle cx="34" cy="35" r="24" fill="none" stroke="#d6e8f8" strokeWidth="3" strokeDasharray="1 3" />
          <path d="M50 16L30 32l8 7z" fill="#e84a3e" />
          <path d="M18 54l12-22 8 7z" fill="#fff" />
        </Svg>
      </Tile>
      <Tile dot badge="1,320" badgeClass="left-[22px] w-[50px] tracking-[-0.5px]" className="bg-[#5cc85a]">
        <Svg>
          <ellipse cx="34" cy="34" rx="26" ry="24" fill="#f2f8ee" />
          <path d="M16 52l-2 10 12-6z" fill="#f2f8ee" />
        </Svg>
      </Tile>
      <Tile className="bg-[linear-gradient(to_bottom,#2a6cf0,#5cc0fa)]">
        <Svg>
          <rect x="10" y="18" width="48" height="34" rx="2" fill="#f2f2f2" />
          <path d="M10 20l24 24 24-24M10 52l18-18M58 52L40 34" stroke="#b8b8b8" strokeWidth="1.5" fill="none" />
        </Svg>
      </Tile>
      <Tile className="bg-[#7fd07a]">
        <Svg>
          <path d="M0 0h22L0 40z" fill="#f09ac8" />
          <path d="M0 40l24-24 10 54H0z" fill="#e48ac6" />
          <path d="M44 70L68 44v26z" fill="#f2c94c" />
          <path d="M42 0h12c0 20 6 26 14 30v10C50 36 42 20 42 0z" fill="#ccc" />
          <path d="M22 0h12v30H22z" fill="#2f7cf0" />
          <path d="M28 70l8-40 30 40z" fill="#eee" />
          <circle cx="28" cy="40" r="17" fill="#fff" />
          <circle cx="28" cy="40" r="13" fill="#2f7cf0" />
          <path d="M28 30l8 18-8-4-8 4z" fill="#fff" />
        </Svg>
      </Tile>
      <Tile className="bg-white">
        <Svg>
          {petals.map(([c, deg]) => (
            <ellipse key={c} cx="34" cy="18" rx="8" ry="15" fill={c} opacity="0.85" transform={`rotate(${deg} 34 35)`} />
          ))}
        </Svg>
      </Tile>
      <Tile className="bg-[#5ed46a]">
        <Svg>
          <rect x="10" y="18" width="30" height="34" rx="8" fill="#f0f4ee" />
          <path d="M43 30l14-10v30L43 40z" fill="#f0f4ee" />
        </Svg>
      </Tile>
      <Tile className="bg-white flex flex-col items-center font-['Liberation_Sans',sans-serif]">
        <div className="w-full h-[22px] bg-[#df4a42] text-white text-[16px] leading-[22px] text-center font-medium">JUN</div>
        <div className="text-[44px] leading-[48px] text-[#222]">30</div>
      </Tile>
      <Tile className="bg-[#a98650]">
        <Svg>
          <circle cx="34" cy="28" r="18" fill="none" stroke="#8a6a3c" strokeWidth="2" />
          <ellipse cx="34" cy="24" rx="6" ry="9" fill="#8a6a3c" />
          <ellipse cx="34" cy="54" rx="16" ry="11" fill="#8a6a3c" />
        </Svg>
      </Tile>
      <Tile badge="6" badgeClass="left-[42px] w-[33px]" className="bg-white">
        <Svg>
          {[["#3478f0", 14], ["#e84a3e", 36], ["#f09a3c", 58]].map(([c, y]) => (
            <g key={c}>
              <circle cx="12" cy={y} r="5" fill="none" stroke={c} strokeWidth="2.5" />
              <path d={`M26 ${y}h34`} stroke="#bbb" strokeWidth="2" />
            </g>
          ))}
        </Svg>
      </Tile>
      <Tile className="bg-[#f4f2ea]">
        <Svg>
          <rect width="68" height="18" fill="#f6cf45" />
          <path d="M0 36h68M0 56h68" stroke="#ccc" strokeWidth="1.5" />
        </Svg>
      </Tile>
      <Tile className="bg-white">
        <Svg>
          <rect x="22" y="10" width="36" height="42" rx="6" fill="#5cc0f0" />
          <circle cx="26" cy="46" r="18" fill="#f07a5a" />
          <path d="M10 46c6-18 10-18 12-4s6 8 8-6 6-8 8 2 8 6 14-8" stroke="#1a2a4a" strokeWidth="3.5" fill="none" />
        </Svg>
      </Tile>
      <Tile className="bg-[#ec4a58]">
        <Svg>
          <path d="M26 52V18l26-7v34" stroke="#fff" strokeWidth="5" fill="none" />
          <ellipse cx="19" cy="53" rx="8" ry="7" fill="#fff" />
          <ellipse cx="45" cy="46" rx="8" ry="7" fill="#fff" />
        </Svg>
      </Tile>
      <Tile className="bg-[#18201f] flex items-center justify-center text-white">
        <FaApple size={20} className="mr-[1px] -mt-[6px]" />
        <span className="text-[30px] leading-none font-medium font-['Liberation_Sans',sans-serif]">tv</span>
      </Tile>
      <Tile className="bg-white">
        <Svg>
          <path d="M12 10h16l28 44v8H42L12 16z" fill="#e8475c" />
          <path d="M12 20l14 22v20H12zM42 10h14v36L42 26z" fill="#e8475c" />
        </Svg>
      </Tile>
      <Tile className="bg-[linear-gradient(to_bottom,#2b7af0,#5aa8f8)]">
        <Svg>
          <rect x="14" y="8" width="40" height="28" fill="#f2f2f2" />
          <circle cx="34" cy="19" r="8" fill="#e0a03c" />
          <rect x="14" y="36" width="40" height="4" fill="#ddd" />
          <path d="M34 40v22" stroke="#eee" strokeWidth="3" />
          <rect x="26" y="60" width="16" height="4" fill="#eee" />
        </Svg>
      </Tile>
      <Tile dot className="bg-[#62d25a]">
        <Svg>
          <rect x="12" y="44" width="8" height="22" fill="#f2f8ee" />
          <rect x="25" y="30" width="8" height="36" fill="#f2f8ee" />
          <rect x="38" y="8" width="8" height="58" fill="#f2f8ee" />
          <rect x="50" y="24" width="8" height="42" fill="#f2f8ee" />
        </Svg>
      </Tile>
      <Tile className="bg-[linear-gradient(to_bottom,#f4a23c,#f09232)]">
        <Svg>
          <path d="M36 56L54 10l8 4-20 44z" fill="#fff" />
          <rect x="8" y="52" width="26" height="4" fill="#f8d8a8" />
        </Svg>
      </Tile>
      <Tile className="bg-[linear-gradient(to_bottom,#4cb4f4,#2466e0)]">
        <Svg>
          <path d="M40 8L16 56M28 8l24 48M10 42h48" stroke="#fff" strokeWidth="6" fill="none" strokeLinecap="round" />
        </Svg>
      </Tile>
      <Tile badge="1" badgeClass="left-[40px] w-[33px]" className="bg-[#9aa0a4]">
        <Svg>
          <circle cx="34" cy="35" r="28" fill="#3a3a3c" />
          <circle cx="34" cy="35" r="22" fill="none" stroke="#c8c8c8" strokeWidth="5" strokeDasharray="4 2" />
          <path d="M34 35V13M34 35L15 46M34 35l19 11" stroke="#c8c8c8" strokeWidth="4" />
        </Svg>
      </Tile>
      <Tile className="bg-[#dcdcdc]">
        <Svg>
          <rect x="20" y="6" width="28" height="58" rx="5" fill="#14202a" />
          <rect x="22" y="10" width="24" height="50" rx="3" fill="#e8a890" />
          <path d="M22 36c12-6 18 0 24-6v30H22z" fill="#2a6a8a" />
        </Svg>
      </Tile>
      <Tile className="bg-[#a050d8]">
        <Svg>
          <rect x="12" y="14" width="44" height="42" rx="5" fill="#fff" />
          <path d="M26 54v10l10-10z" fill="#fff" />
          <rect x="31" y="22" width="6" height="20" rx="2" fill="#a050d8" />
          <circle cx="34" cy="48" r="3.5" fill="#a050d8" />
        </Svg>
      </Tile>
    </>
  );
}

function DockRightApps() {
  return (
    <>
      <Tile dot><Chrome beta /></Tile>
      <Tile dot className="bg-[#f4e8a0]">
        <Svg>
          <path d="M8 24c4-16 6-14 7 0s5 2 8-4 4 4 10 2" stroke="#d8c060" strokeWidth="2.5" fill="none" />
          <rect x="10" y="34" width="44" height="8" fill="#e4d070" />
          <rect x="10" y="50" width="24" height="7" fill="#e4d070" />
          <path d="M66 44c0 14-4 20-20 22h20z" fill="#d8c060" />
        </Svg>
      </Tile>
      <Tile dot className="bg-[#1f2a4a]">
        <Svg>
          <path d="M8 40v20h52V40" stroke="#4a9ae8" strokeWidth="3" fill="none" />
          <path d="M20 8h28" stroke="#f0c83c" strokeWidth="4" />
          <path d="M52 12c6 4 8 10 8 22" stroke="#7ac86a" strokeWidth="3" fill="none" />
          <path d="M34 36L20 20c8-2 12 6 14 16zM34 36L18 52c0-8 8-14 16-16zM34 36l12 14" stroke="#fff" strokeWidth="2.5" fill="none" />
          <circle cx="34" cy="36" r="5" fill="#9a9ad8" />
        </Svg>
      </Tile>
      <Tile dot className="bg-[#1c1446]">
        <Svg>
          <path d="M34 66C14 66 8 48 14 32c2 4 4 4 6 4 0-10 8-18 14-20 0 8 6 8 10 2 2-4 4-10 2-16 10 10 16 24 14 38-2 16-12 26-26 26z" fill="#3aa0f0" />
          <ellipse cx="34" cy="44" rx="12" ry="16" fill="#2030a8" />
        </Svg>
      </Tile>
      <Tile dot className="bg-white flex items-center justify-center">
        <SiOpenai size={58} className="text-[#1c1c1c]" />
      </Tile>
      <Tile dot><Chrome /></Tile>
      <Tile dot className="bg-[#c8dce0] p-[4px]">
        <div className="w-full h-full bg-black rounded-[10px] p-[4px]">
          <div className="relative w-full h-full rounded-[6px] bg-[#222] text-white text-[16px] leading-[22px] pl-[6px]">
            &gt;_
          </div>
        </div>
      </Tile>
      <Tile dot className="bg-white">
        <Svg>
          <path d="M46 8L22 32 10 22l-5 4 12 10-12 10 5 4 12-10 24 24 12-6V14z" fill="#2a7ac8" />
          <path d="M46 22v26L28 36z" fill="#fff" />
        </Svg>
      </Tile>
      <Tile dot className="bg-[#cc7355]">
        <Svg>
          <path d="M34 10v50M14 18l40 34M54 18L14 52M8 35h52M24 12l20 46M44 12L24 58" stroke="#fdf4ee" strokeWidth="3.5" />
        </Svg>
      </Tile>
    </>
  );
}

function SmallChrome() {
  return (
    <div className="w-[28px] h-[28px] rounded-full overflow-hidden shrink-0 mt-[42px]">
      <Chrome />
    </div>
  );
}

function Dock() {
  return (
    <div className="absolute left-[73px] top-[6px] w-[3312px] h-[107px] rounded-[26px] border-t border-[#8a8a86] bg-[linear-gradient(to_right,#6f726b_0%,#5f5f5c_24%,#a8a7a4_28%,#b4b3b0_100%)] pl-[15px] pt-[16px] flex items-start">
      <div className="flex gap-[21.6px]"><DockLeftApps /></div>
      <span className="ml-[30px] mr-[28px] w-[2px] h-[80px] -mt-[3px] bg-[#8c8c88] shrink-0" />
      <div className="flex gap-[21.5px]"><DockRightApps /></div>
      <span className="ml-[31px] mr-[28px] w-[2px] h-[80px] -mt-[3px] bg-[#8c8c88] shrink-0" />
      <svg width="70" height="66" viewBox="0 0 70 66" className="-mt-[6px] shrink-0">
        <rect x="14" y="0" width="42" height="26" fill="#f2f2f2" />
        <rect x="0" y="20" width="70" height="46" fill="#f4f6f6" />
        <rect x="0" y="20" width="70" height="8" fill="#2a5a7a" />
        <rect x="62" y="26" width="8" height="36" fill="#2a5a7a" />
        <rect x="0" y="28" width="3" height="36" fill="#2a5a7a" />
        <rect x="0" y="62" width="70" height="4" fill="#1f3a52" />
        <circle cx="20" cy="44" r="7" fill="#d4b078" />
        <circle cx="52" cy="44" r="6" fill="#8ab890" />
      </svg>
      <div className="ml-[66px] mr-[61px]"><SmallChrome /></div>
      <SmallChrome />
      <svg width="62" height="78" viewBox="0 0 62 78" className="ml-[23px] -mt-[5px] shrink-0">
        <path d="M2 14h58l-7 60a5 5 0 0 1-5 4H14a5 5 0 0 1-5-4z" fill="#d8d8d6" />
        <ellipse cx="31" cy="14" rx="29" ry="10" fill="#c8c8c6" />
        <path d="M12 16l6-14 6 14M28 16l6-14 6 14M42 16l6-12 6 12" fill="#54544e" />
      </svg>
    </div>
  );
}

function BottomArea() {
  return (
    <div className="relative flex-1 flex border-t-[6px] border-[#0a0a0a]">
      <div className="w-[945px] bg-[#141a11] bg-[radial-gradient(circle_at_10%_60%,#3a4a2c,transparent_10%),radial-gradient(circle_at_25%_90%,#2f3a22,transparent_15%)]" />
      <div className="flex-1 bg-[#ededed]" />
      <div className="w-[39px] bg-[#ece6a4] overflow-hidden text-[34px] font-bold text-[#111] pt-[22px] pl-[2px]">Inici</div>
      <div className="absolute inset-0 -top-[6px]"><Dock /></div>
    </div>
  );
}

export default function App() {
  return (
    <div className="relative w-[3456px] h-[2234px] overflow-hidden flex flex-col bg-black font-['Inter',sans-serif]">
      <MenuBar />
      <div className="shrink-0 h-[2036px] mt-0 border-t-2 border-[#000]">
        <div className="h-[2034px] rounded-t-[18px] rounded-b-[18px] overflow-hidden border-t-2 border-[#5a5a60] bg-[#1c1b22] flex flex-col">
          <TabStrip />
          <UrlBar />
          <BookmarkBar />
          <Banner />
          <Page />
          <FindBar />
          <DevTabs />
          <FilterBar />
          <NetworkTable />
          <div className="flex-1 bg-[#232327]" />
          <StatusBar />
        </div>
      </div>
      <BottomArea />

      {/* ChatGPT notification sits on top of the tab strip */}
      <div className="absolute left-[2738px] top-[106px] w-[686px] h-[114px] rounded-[28px] bg-[#9c9b9f] border-y-2 border-[#aeadb1] flex items-center pl-[25px] text-[#1c1c1e] shadow-[0_2px_10px_#0006]">
        <div className="w-[62px] h-[64px] rounded-[14px] bg-[linear-gradient(to_bottom,#fff,#e2e8f2)] flex items-center justify-center">
          <SiOpenai size={50} className="text-[#1c1c1c]" />
        </div>
        <div className="ml-[28px]">
          <div className="text-[26px] leading-[32px] font-semibold">ChatGPT</div>
          <div className="text-[25px] leading-[32px] tracking-[-0.3px]">Time for iron and B12</div>
        </div>
      </div>
      <Tooltip />
    </div>
  );
}
